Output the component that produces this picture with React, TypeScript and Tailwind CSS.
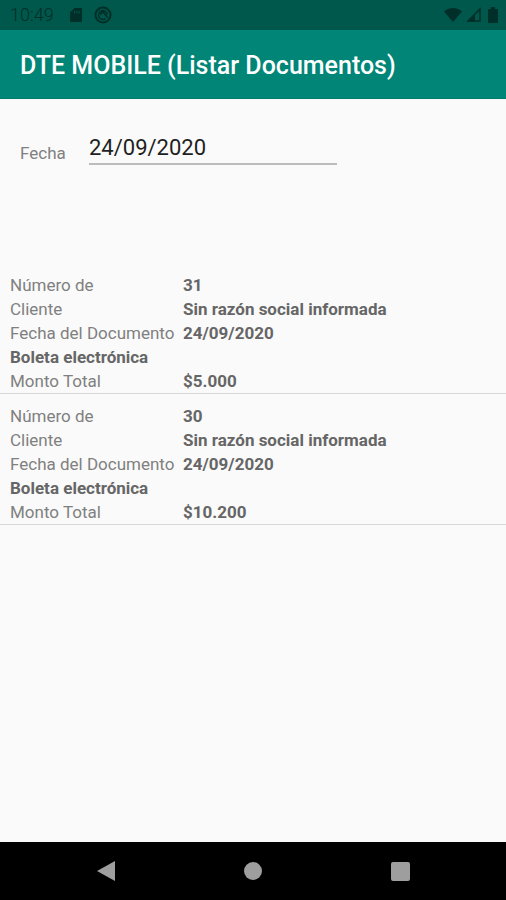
type DocumentRecord = {
  number: string;
  client: string;
  date: string;
  kind: string;
  total: string;
};

const records: DocumentRecord[] = [
  { number: '31', client: 'Sin razón social informada', date: '24/09/2020', kind: 'Boleta electrónica', total: '$5.000' },
  { number: '30', client: 'Sin razón social informada', date: '24/09/2020', kind: 'Boleta electrónica', total: '$10.200' },
];

function StatusBar() {
  return (
    <div className="flex h-[30px] shrink-0 items-center justify-between bg-[#00574b] pr-2 pl-2.5 text-[#002f29]">
      <div className="flex items-center">
        <span className="text-[18px] leading-5 font-light">10:49</span>
        <svg className="ml-4 h-4 w-3" viewBox="0 0 12 16" fill="currentColor" aria-hidden="true">
          <path fillRule="evenodd" d="M4.500 1H11a1 1 0 0 1 1 1v12a1 1 0 0 1-1 1H1a1 1 0 0 1-1-1V5.500zM4 4v2.500h1V4zm2.300 0v2.500h1V4zm2.300 0v2.500h1V4z" />
        </svg>
        <svg className="ml-3 size-[18px]" viewBox="0 0 18 18" fill="none" stroke="currentColor" aria-hidden="true">
          <circle cx="9" cy="9" r="7.500" strokeWidth="2" />
          <path d="M11.500 12.600A4.400 4.400 0 1 1 13.300 8.500" strokeWidth="1.500" />
          <path d="M6 8.500l3-3 4.500 6" strokeWidth="1.800" />
        </svg>
      </div>
      <div className="flex items-center">
        <svg className="h-4 w-[18px]" viewBox="0 0 18 16" fill="currentColor" aria-hidden="true">
          <path d="M0 4.500C5-.300 13-.300 18 4.500L9 15z" />
        </svg>
        <svg className="ml-1 size-4" viewBox="0 0 16 16" aria-hidden="true">
          <path d="M2 14L14 2v12z" fill="none" stroke="currentColor" strokeWidth="1.500" />
          <path d="M1 15l8-8v8z" fill="currentColor" />
        </svg>
        <svg className="ml-1.5 h-4 w-2.5" viewBox="0 0 10 16" fill="currentColor" aria-hidden="true">
          <path d="M3 0h4v2h2a1 1 0 0 1 1 1v12a1 1 0 0 1-1 1H1a1 1 0 0 1-1-1V3a1 1 0 0 1 1-1h2z" />
        </svg>
      </div>
    </div>
  );
}

function RecordItem({ record }: { record: DocumentRecord }) {
  return (
    <li className="border-b border-[#d8d8d8] px-2.5 pt-2.5">
      <dl className="grid grid-cols-[173px_1fr] text-[17px] leading-6 whitespace-nowrap text-[#808080] [&_dd]:font-bold [&_dd]:text-[#666666]">
        <dt>Número de</dt>
        <dd>{record.number}</dd>
        <dt>Cliente</dt>
        <dd>{record.client}</dd>
        <dt>Fecha del Documento</dt>
        <dd>{record.date}</dd>
        <dd className="col-span-2">{record.kind}</dd>
        <dt>Monto Total</dt>
        <dd>{record.total}</dd>
      </dl>
    </li>
  );
}

export default function App() {
  return (
    <div className="flex min-h-screen flex-col bg-[#fafafa] font-[Roboto,sans-serif]">
      <StatusBar />
      <header className="flex h-[69px] shrink-0 items-center border-b border-[#00796b] bg-[#008577] px-5">
        <h1 className="pt-1 text-[25px] leading-8 font-medium text-white">DTE MOBILE (Listar Documentos)</h1>
      </header>
      <main className="flex-1">
        <div className="flex items-start px-5 pt-8">
          <label htmlFor="fecha" className="w-[69px] pt-2.5 text-[17px] leading-6 text-[#808080]">
            Fecha
          </label>
          <input
            id="fecha"
            type="text"
            defaultValue="24/09/2020"
            className="h-[34px] w-[248px] border-b-2 border-[#bcbcbc] bg-transparent text-[22px] text-[#1f1f1f] outline-none"
          />
        </div>
        <ul className="mt-[98px]">
          {records.map((record) => (
            <RecordItem key={record.number} record={record} />
          ))}
        </ul>
      </main>
      <nav className="grid h-[58px] shrink-0 grid-cols-[1fr_84px_1fr] items-center bg-black text-[#9e9e9e]">
        <button type="button" aria-label="Atrás" className="flex justify-center">
          <svg className="h-[22px] w-[18px]" viewBox="0 0 18 22" fill="currentColor" aria-hidden="true">
            <path d="M18 1v20L0 11z" />
          </svg>
        </button>
        <button type="button" aria-label="Inicio" className="flex justify-center">
          <span className="size-[18px] rounded-full bg-current" />
        </button>
        <button type="button" aria-label="Recientes" className="flex justify-center">
          <span className="size-[19px] rounded-[2px] bg-current" />
        </button>
      </nav>
    </div>
  );
}
